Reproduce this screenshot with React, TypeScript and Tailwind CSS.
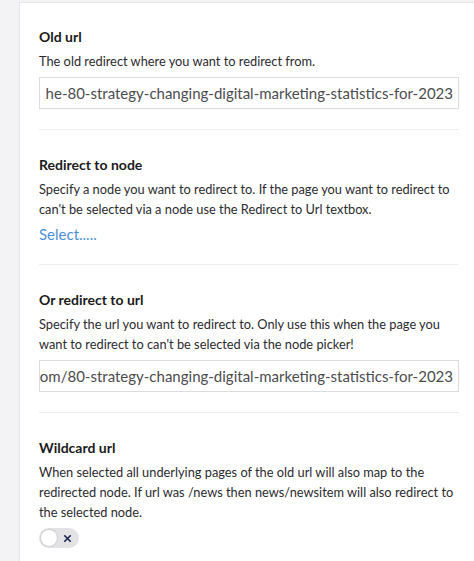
import { X } from 'lucide-react';

const font = { fontFamily: 'Lato, "Open Sans", sans-serif' };

function Section({ title, children, first, last }: { title: string; children: React.ReactNode; first?: boolean; last?: boolean }) {
  return (
    <div className={`${first ? 'pt-[24px]' : 'pt-[25px]'} pb-[20px] ${last ? '' : 'border-b border-[#eeeef0]'}`}>
      <div className="text-[14px] leading-[20px] font-bold text-[#1a1a1a] mb-[4px]">{title}</div>
      {children}
    </div>
  );
}

function UrlBox({ value }: { value: string }) {
  return (
    <div className="mt-[6px] h-[32px] border border-[#dcdcde] bg-white flex items-center justify-end overflow-hidden pr-[5px]">
      <span className="whitespace-nowrap text-[15px] text-[#4c4c4f]">{value}</span>
    </div>
  );
}

export default function App() {
  return (
    <div className="min-h-[561px] bg-[#f3f3f5] pl-[19px] pt-[2px]" style={font}>
      <div className="bg-white border-l border-t border-[#e6e6e9] pl-[19px] pr-[15px] min-h-[559px]">
        <Section title="Old url" first>
          <p className="text-[12.8px] leading-[20px] text-[#2b2b2e]">The old redirect where you want to redirect from.</p>
          <UrlBox value="he-80-strategy-changing-digital-marketing-statistics-for-2023" />
        </Section>

        <Section title="Redirect to node">
          <p className="text-[12.8px] leading-[20px] text-[#2b2b2e]">
            Specify a node you want to redirect to. If the page you want to redirect to can't be selected via a node use the Redirect to Url textbox.
          </p>
          <a className="block mt-[5px] text-[15px] leading-[20px] text-[#4d8fd6] cursor-pointer">Select.....</a>
        </Section>

        <Section title="Or redirect to url">
          <p className="text-[12.8px] leading-[20px] text-[#2b2b2e]">
            Specify the url you want to redirect to. Only use this when the page you want to redirect to can't be selected via the node picker!
          </p>
          <UrlBox value="https://www.example.com/80-strategy-changing-digital-marketing-statistics-for-2023" />
        </Section>

        <Section title="Wildcard url" last>
          <p className="text-[12.8px] leading-[20px] text-[#2b2b2e]">
            When selected all underlying pages of the old url will also map to the redirected node. If url was /news then news/newsitem will also redirect to the selected node.
          </p>
          <button className="mt-[6px] relative w-[40px] h-[20px] rounded-full bg-[#e3e3e6] flex items-center">
            <span className="absolute left-[2px] top-[2px] w-[16px] h-[16px] rounded-full bg-white shadow-[0_0_2px_rgba(0,0,0,0.25)]" />
            <X size={11} strokeWidth={3.5} className="absolute left-[23px] top-[4.5px] text-[#1b264f]" />
          </button>
        </Section>
      </div>
    </div>
  );
}
